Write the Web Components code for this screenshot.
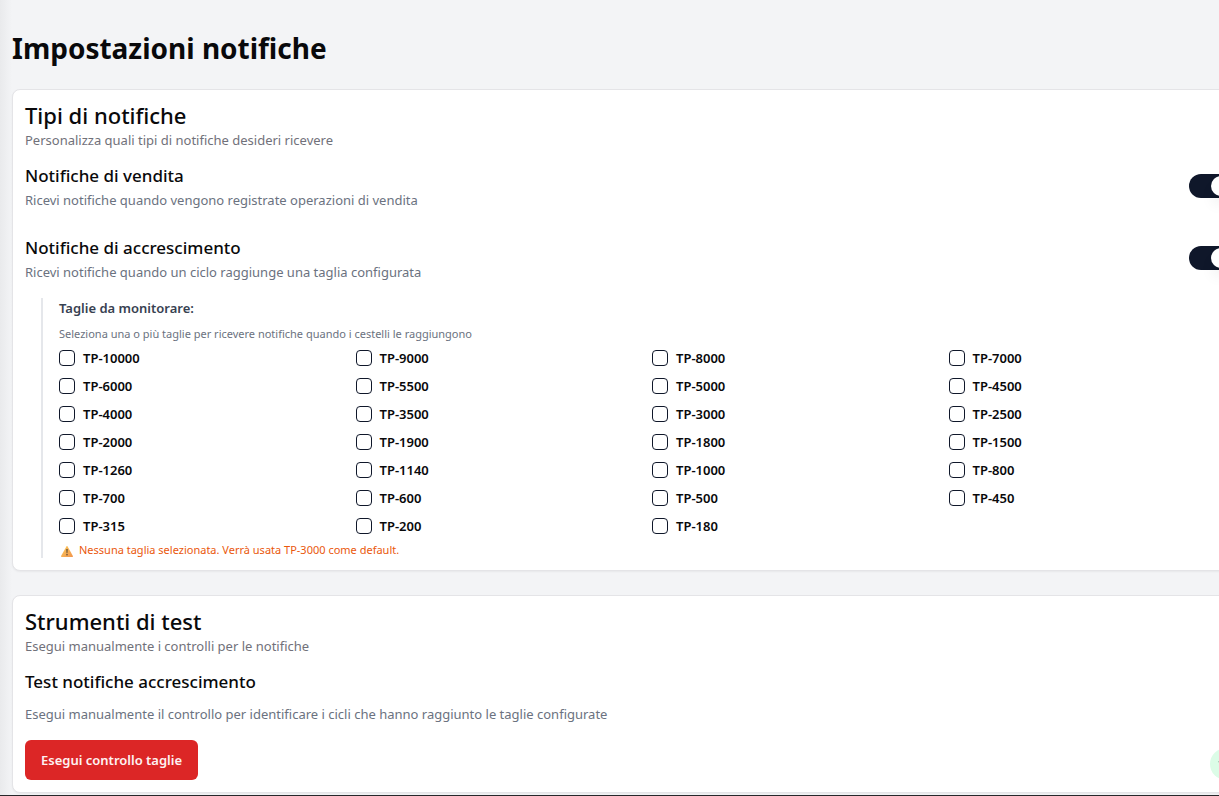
<!DOCTYPE html>
<html lang="it">
<head>
<meta charset="utf-8">
<meta name="viewport" content="width=device-width, initial-scale=1">
<title>Impostazioni notifiche</title>
<style>
  html { background: #f3f4f6; }
  body {
    margin: 0;
    overflow: hidden;
    font-family: "Noto Sans", "Open Sans", sans-serif;
    color: #09090b;
    --muted: #71717a;
    --slate: #6b7280;
    --ink: #0f172a;
    --line: #e4e4e7;
    --text-xs: 11px;
    --text-sm: 13px;
    --text-lg: 17px;
    --text-2xl: 22px;
    --text-3xl: 28px;
  }
</style>
</head>
<body>
<settings-page heading="Impostazioni notifiche">
  <settings-card heading="Tipi di notifiche" description="Personalizza quali tipi di notifiche desideri ricevere">
    <toggle-row heading="Notifiche di vendita" description="Ricevi notifiche quando vengono registrate operazioni di vendita"></toggle-row>
    <toggle-row heading="Notifiche di accrescimento" description="Ricevi notifiche quando un ciclo raggiunge una taglia configurata">
      <size-picker
        sizes="10000 9000 8000 7000 6000 5500 5000 4500 4000 3500 3000 2500 2000 1900 1800 1500 1260 1140 1000 800 700 600 500 450 315 200 180"></size-picker>
    </toggle-row>
  </settings-card>
  <settings-card heading="Strumenti di test" description="Esegui manualmente i controlli per le notifiche">
    <test-tool heading="Test notifiche accrescimento" description="Esegui manualmente il controllo per identificare i cicli che hanno raggiunto le taglie configurate">Esegui controllo taglie</test-tool>
  </settings-card>
</settings-page>
<status-bubble></status-bubble>

<script>
  class BaseElement extends HTMLElement {
    connectedCallback() {
      if (this.shadowRoot) return;
      const root = this.attachShadow({ mode: "open" });
      root.innerHTML = "<style>:host{display:block}*{box-sizing:border-box;margin:0}</style>" + this.render();
      root.querySelectorAll("[data-text]").forEach(el => {
        el.textContent = this.getAttribute(el.dataset.text);
      });
    }
  }

  customElements.define("settings-page", class extends BaseElement {
    render() {
      return `
      <style>
        /* The settings column is a little wider than the viewport and is clipped on the right. */
        :host {
          width: calc(100% + 39px);
          min-height: 100vh;
          box-sizing: border-box;
          padding: 30px 12px 0;
          border-bottom: 1px solid #27272a;
          background: linear-gradient(to right, #e9eaec, #f3f4f6 12px);
        }
        h1 { font-size: var(--text-3xl); line-height: 36px; font-weight: 700; }
        main { display: grid; gap: 24px; padding-top: 23px; }
      </style>
      <h1 data-text="heading"></h1>
      <main><slot></slot></main>`;
    }
  });

  customElements.define("settings-card", class extends BaseElement {
    render() {
      return `
      <style>
        :host {
          box-sizing: border-box;
          padding: 12px;
          border: 1px solid var(--line);
          border-radius: 8px;
          background: #fff;
          box-shadow: 0 1px 2px rgb(0 0 0 / .05);
        }
        h2 { padding-bottom: 2px; font-size: var(--text-2xl); line-height: 26px; font-weight: 500; }
        p { font-size: var(--text-sm); line-height: 20px; color: var(--muted); }
        .content { display: grid; gap: 24px; padding-top: 12px; }
      </style>
      <h2 data-text="heading"></h2>
      <p data-text="description"></p>
      <div class="content"><slot></slot></div>`;
    }
  });

  customElements.define("toggle-row", class extends BaseElement {
    render() {
      return `
      <style>
        .row { display: flex; align-items: center; justify-content: space-between; }
        label { display: block; font-size: var(--text-lg); line-height: 28px; font-weight: 500; }
        p { font-size: var(--text-sm); line-height: 20px; color: var(--slate); }
        input {
          appearance: none;
          flex: none;
          width: 44px;
          height: 24px;
          padding: 2px;
          border-radius: 12px;
          background: #e2e8f0;
        }
        input::before {
          content: "";
          display: block;
          width: 20px;
          height: 20px;
          border-radius: 50%;
          background: #fff;
          box-shadow: 0 10px 15px -3px rgb(0 0 0 / .1);
        }
        input:checked { background: var(--ink); }
        input:checked::before { margin-left: 20px; }
        ::slotted(*) { margin: 16px 0 0 16px; }
      </style>
      <div class="row">
        <div>
          <label for="switch" data-text="heading"></label>
          <p data-text="description"></p>
        </div>
        <input id="switch" type="checkbox" role="switch" checked>
      </div>
      <slot></slot>`;
    }
  });

  customElements.define("size-option", class extends BaseElement {
    render() {
      return `
      <style>
        :host { display: flex; align-items: center; gap: 8px; height: 16px; }
        input {
          appearance: none;
          flex: none;
          width: 16px;
          height: 16px;
          border: 1px solid var(--ink);
          border-radius: 4px;
          background: #fff;
        }
        input:checked { background: var(--ink); }
        label { font-size: var(--text-sm); line-height: 16px; font-weight: 600; }
      </style>
      <input id="size" type="checkbox"><label for="size" data-text="label"></label>`;
    }
  });

  customElements.define("size-picker", class extends BaseElement {
    render() {
      const options = this.getAttribute("sizes").trim().split(/\s+/)
        .map(size => `<size-option label="TP-${size}"></size-option>`).join("");
      return `
      <style>
        :host { display: grid; gap: 8px; padding-left: 16px; border-left: 2px solid #e5e7eb; }
        h4 { font-size: var(--text-sm); line-height: 20px; font-weight: 600; color: #374151; }
        p { font-size: var(--text-xs); line-height: 16px; color: var(--slate); }
        .sizes { display: grid; grid-template-columns: repeat(4, 1fr); gap: 12px; }
        .warning { display: flex; align-items: center; gap: 4px; color: #ea580c; }
        svg { width: 16px; height: 16px; flex: none; }
      </style>
      <h4>Taglie da monitorare:</h4>
      <p>Seleziona una o più taglie per ricevere notifiche quando i cestelli le raggiungono</p>
      <div class="sizes">${options}</div>
      <p class="warning">
        <svg viewBox="0 0 16 16" aria-hidden="true">
          <defs><linearGradient id="amber" x1="0" x2="1" y2="1">
            <stop stop-color="#fccb5c"/><stop offset="1" stop-color="#f2954c"/>
          </linearGradient></defs>
          <path d="M7.4 4.4q.6-1 1.2 0l5.3 9.5q.4 1.1-.6 1.1H2.7q-1 0-.6-1.1z" fill="url(#amber)"/>
          <path d="M7.3 7h1.4l-.3 4.3h-.8z" fill="#5a4a38"/>
          <circle cx="8" cy="12.8" r=".8" fill="#5a4a38"/>
        </svg>
        <span>Nessuna taglia selezionata. Verrà usata TP-3000 come default.</span>
      </p>`;
    }
  });

  customElements.define("test-tool", class extends BaseElement {
    render() {
      return `
      <style>
        h3 { font-size: var(--text-lg); line-height: 28px; font-weight: 500; }
        p { padding: 8px 0 16px; font-size: var(--text-sm); line-height: 20px; color: var(--slate); }
        button {
          display: block;
          height: 40px;
          padding: 0 16px;
          border: 0;
          border-radius: 6px;
          background: #dc2626;
          color: #fef2f2;
          font: 600 var(--text-sm)/20px "Noto Sans", "Open Sans", sans-serif;
        }
      </style>
      <h3 data-text="heading"></h3>
      <p data-text="description"></p>
      <button type="button"><slot></slot></button>`;
    }
  });

  customElements.define("status-bubble", class extends BaseElement {
    render() {
      return `
      <style>
        :host { position: fixed; right: -23px; bottom: 16px; }
        button { display: grid; place-items: center; width: 32px; height: 32px; padding: 0; border: 0; border-radius: 50%; background: #dcfce7; }
        svg { width: 16px; height: 16px; }
      </style>
      <button type="button" aria-label="Stato connessione">
        <svg viewBox="0 0 16 16" fill="none" stroke="#9dbfaa" stroke-linecap="round" aria-hidden="true">
          <path d="M0 6q8-6 16 0M4 9q4-3 8 0M8 12h.1"/>
        </svg>
      </button>`;
    }
  });
</script>
</body>
</html>
